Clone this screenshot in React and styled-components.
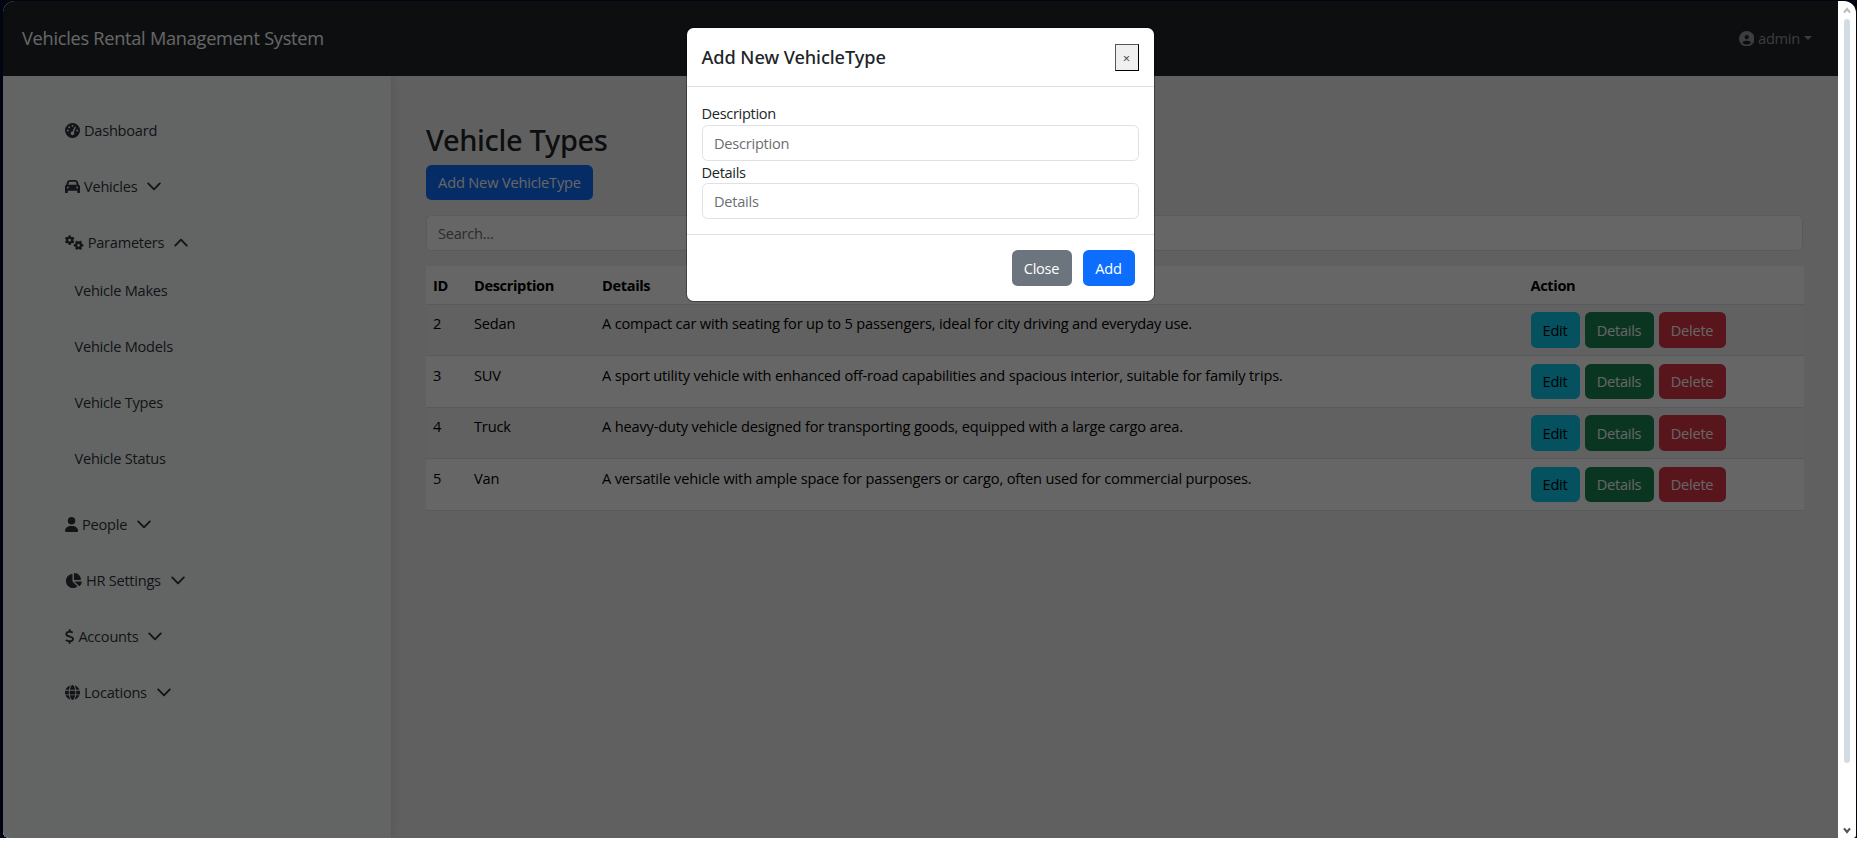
import React from "react";
import styled, { createGlobalStyle } from "styled-components";
import {
  FaGaugeHigh, FaCar, FaGears, FaUser, FaChartPie, FaDollarSign, FaGlobe, FaCircleUser,
} from "react-icons/fa6";

const GlobalStyle = createGlobalStyle`
  * { box-sizing: border-box; }
  body {
    margin: 0;
    background: linear-gradient(#010512 838px, #fff 838px);
    color: #212529;
    font-family: "Segoe UI", "Open Sans", "Noto Sans", sans-serif;
    font-size: 14.6px;
    line-height: 22.4px;
    letter-spacing: -0.25px;
    height: 842px;
    overflow: hidden;
  }
`;

const Window = styled.div`
  display: flex;
  height: 837px;
  margin: 0 1px 0 3px;
  border-radius: 12px 12px 3px 6px;
  overflow: hidden;
  position: relative;
`;

const Shell = styled.div`
  padding-top: 1px;
`;

const Page = styled.div`
  flex: 1;
  min-width: 0;
  display: flex;
  flex-direction: column;
  background: #f2f1f1;
`;

const Navbar = styled.header`
  display: flex;
  align-items: center;
  justify-content: space-between;
  height: 75px;
  flex: none;
  padding: 0 26px 0 19px;
  background: #212529;
`;

const Brand = styled.span`
  color: #fff;
  font-size: 18.2px;
  letter-spacing: -0.27px;
`;

const UserMenu = styled.div`
  display: flex;
  align-items: center;
  color: #96989a;
  svg { width: 15.5px; height: 15.5px; margin-right: 4px; }
`;

const Caret = styled.i`
  margin: 0 0 1px 4px;
  border: 4.3px solid transparent;
  border-top-color: currentColor;
  border-bottom: 0;
`;

const Columns = styled.div`
  flex: 1;
  display: flex;
`;

const Sidebar = styled.nav`
  width: 388px;
  padding: 26.2px 0 0 62px;
  background: #f7fdfa;
  box-shadow: 2px 0 10px rgba(0, 0, 0, 0.1);
  color: #2f333c;
`;

const NavItem = styled.div`
  display: flex;
  align-items: center;
  height: 56.1px;
`;

const NavIcon = styled.span`
  display: flex;
  margin-right: 4px;
  svg { height: 15px; width: ${(p) => p.$w}px; }
`;

const Chevron = styled.svg`
  width: 14px;
  height: 9px;
  margin-left: 10px;
  fill: none;
  stroke: currentColor;
  stroke-width: 1.9;
  stroke-linecap: round;
  stroke-linejoin: round;
  transform: ${(p) => (p.$open ? "rotate(180deg)" : "none")};
`;

const SubMenu = styled.div`
  margin: -8.7px 0 9.8px;
  padding-left: 9.5px;
`;

const Main = styled.main`
  flex: 1;
  padding: 46px 34px 0 35px;
`;

const Heading = styled.h2`
  margin: 0 0 7px;
  font-family: "Segoe UI", "Noto Sans", sans-serif;
  font-size: 29px;
  font-weight: 500;
  line-height: 36px;
  letter-spacing: -0.33px;
`;

const tones = {
  primary: ["#0d6efd", "#fff"],
  secondary: ["#6c757d", "#fff"],
  info: ["#0dcaf0", "#000"],
  success: ["#198754", "#fff"],
  danger: ["#dc3545", "#fff"],
};

const Button = styled.button`
  width: ${(p) => p.$w}px;
  height: ${(p) => p.$h || 35.5}px;
  padding: 0;
  border: 0;
  border-radius: 5.6px;
  background: ${(p) => tones[p.$tone][0]};
  color: ${(p) => tones[p.$tone][1]};
  font: inherit;
  letter-spacing: ${(p) => p.$ls || "-0.25px"};
`;

const Input = styled.input`
  display: block;
  width: 100%;
  height: 35.5px;
  padding: 0 11.5px;
  border: 1px solid #dee2e6;
  border-radius: 5.6px;
  background: #fff;
  font: inherit;
  letter-spacing: inherit;
  outline: 0;
  &::placeholder { color: #6b6e72; opacity: 1; }
`;

const Search = styled(Input)`
  margin: 15px 0;
  width: calc(100% - 1px);
  padding-left: 11px;
`;

const Table = styled.div`
  color: #000;
`;

const Row = styled.div`
  display: grid;
  grid-template-columns: 41px 128px 928.5px 1fr;
  height: ${(p) => (p.$head ? 39 : 51.6)}px;
  padding: ${(p) => (p.$head ? 8.2 : 7.5)}px 7px 0;
  font-weight: ${(p) => (p.$head ? 700 : 400)};
  letter-spacing: ${(p) => (p.$head ? "-0.36px" : "-0.17px")};
  background: ${(p) => (p.$striped ? "#f2f2f2" : "#fff")};
  border-bottom: 1px solid #dee2e6;
`;

const Actions = styled.div`
  display: flex;
  gap: 5px;
`;

const Scrollbar = styled.div`
  width: 18px;
  display: flex;
  flex-direction: column;
  align-items: center;
  padding: 6px 0 4px;
  background: #fff;
`;

const Thumb = styled.div`
  width: 6px;
  height: 744px;
  margin: 5px 0 auto;
  border-radius: 3px;
  background: #d2dce4;
`;

const Arrow = styled.svg`
  width: 8px;
  height: 7px;
  fill: none;
  stroke: ${(p) => p.$color};
  stroke-width: 2.2;
`;

const Backdrop = styled.div`
  position: absolute;
  inset: 0 18px 0 0;
  display: flex;
  align-items: flex-start;
  justify-content: center;
  padding-top: 27px;
  background: rgba(0, 0, 0, 0.6);
`;

const Dialog = styled.section`
  width: 467px;
  height: 273px;
  margin-right: 1px;
  border-radius: 6.5px;
  background: #fff;
  box-shadow: 0 0 0 1px rgba(0, 0, 0, 0.35);
`;

const DialogHeader = styled.div`
  display: flex;
  align-items: center;
  justify-content: space-between;
  height: 59px;
  padding: 0 15px;
  border-bottom: 1px solid #dee2e6;
`;

const DialogTitle = styled.h5`
  margin: 0;
  font-family: "Segoe UI", "Noto Sans", sans-serif;
  font-size: 18.2px;
  font-weight: 500;
  letter-spacing: -0.08px;
`;

const CloseButton = styled.button`
  width: 24px;
  height: 27px;
  padding: 1px 0 0;
  border: 1px solid #000;
  border-top-color: #555;
  border-left-color: #555;
  background: #f0f0f0;
  color: #444;
  font: 13px/24px "Open Sans", sans-serif;
`;

const DialogBody = styled.div`
  height: 148px;
  padding: 15.5px 15px 0;
  border-bottom: 1px solid #dee2e6;
`;

const Label = styled.label`
  display: block;
  letter-spacing: -0.32px;
  height: 22.5px;
  line-height: ${(p) => p.$lh}px;
`;

const DialogFooter = styled.div`
  display: flex;
  justify-content: flex-end;
  gap: 11px;
  padding: 15px 19px 0 0;
`;

const Angle = ({ open }) => (
  <Chevron viewBox="0 0 14 9" $open={open}>
    <path d="M1.2 1.4 L7 7.3 L12.8 1.4" />
  </Chevron>
);

const NavEntry = ({ icon: Icon, width = 15, label, open, plain }) => (
  <NavItem>
    <NavIcon $w={width}><Icon /></NavIcon>
    {label}
    {!plain && <Angle open={open} />}
  </NavItem>
);

const vehicleTypes = [
  [2, "Sedan", "A compact car with seating for up to 5 passengers, ideal for city driving and everyday use."],
  [3, "SUV", "A sport utility vehicle with enhanced off-road capabilities and spacious interior, suitable for family trips."],
  [4, "Truck", "A heavy-duty vehicle designed for transporting goods, equipped with a large cargo area."],
  [5, "Van", "A versatile vehicle with ample space for passengers or cargo, often used for commercial purposes."],
];

export default function App() {
  return (
    <Shell>
      <GlobalStyle />
      <Window>
        <Page>
          <Navbar>
            <Brand>Vehicles Rental Management System</Brand>
            <UserMenu><FaCircleUser />admin<Caret /></UserMenu>
          </Navbar>
          <Columns>
            <Sidebar>
              <NavEntry icon={FaGaugeHigh} label="Dashboard" plain />
              <NavEntry icon={FaCar} label="Vehicles" />
              <NavEntry icon={FaGears} width={18.7} label="Parameters" open />
              <SubMenu>
                {["Makes", "Models", "Types", "Status"].map((s) => (
                  <NavItem key={s}>Vehicle {s}</NavItem>
                ))}
              </SubMenu>
              <NavEntry icon={FaUser} width={13.1} label="People" />
              <NavEntry icon={FaChartPie} width={16.9} label="HR Settings" />
              <NavEntry icon={FaDollarSign} width={9.4} label="Accounts" />
              <NavEntry icon={FaGlobe} label="Locations" />
            </Sidebar>
            <Main>
              <Heading>Vehicle Types</Heading>
              <Button $tone="primary" $w={167} $h={35} $ls="-0.17px">Add New VehicleType</Button>
              <Search placeholder="Search..." />
              <Table>
                <Row $head>
                  <span>ID</span><span>Description</span><span>Details</span><span>Action</span>
                </Row>
                {vehicleTypes.map(([id, name, details], i) => (
                  <Row key={id} $striped={i % 2 === 0}>
                    <span>{id}</span><span>{name}</span><span>{details}</span>
                    <Actions>
                      <Button $tone="info" $w={49}>Edit</Button>
                      <Button $tone="success" $w={69}>Details</Button>
                      <Button $tone="danger" $w={67}>Delete</Button>
                    </Actions>
                  </Row>
                ))}
              </Table>
            </Main>
          </Columns>
        </Page>
        <Scrollbar>
          <Arrow viewBox="0 0 8 7" $color="#bdbdbd"><path d="M1 5.6 L4 2 L7 5.6" /></Arrow>
          <Thumb />
          <Arrow viewBox="0 0 8 7" $color="#555"><path d="M1 1.4 L4 5 L7 1.4" /></Arrow>
        </Scrollbar>
        <Backdrop>
          <Dialog>
            <DialogHeader>
              <DialogTitle>Add New VehicleType</DialogTitle>
              <CloseButton>×</CloseButton>
            </DialogHeader>
            <DialogBody>
              <Label $lh={21}>Description</Label>
              <Input placeholder="Description" />
              <Label $lh={22.5}>Details</Label>
              <Input placeholder="Details" />
            </DialogBody>
            <DialogFooter>
              <Button $tone="secondary" $w={60} $h={36}>Close</Button>
              <Button $tone="primary" $w={52} $h={36}>Add</Button>
            </DialogFooter>
          </Dialog>
        </Backdrop>
      </Window>
    </Shell>
  );
}
